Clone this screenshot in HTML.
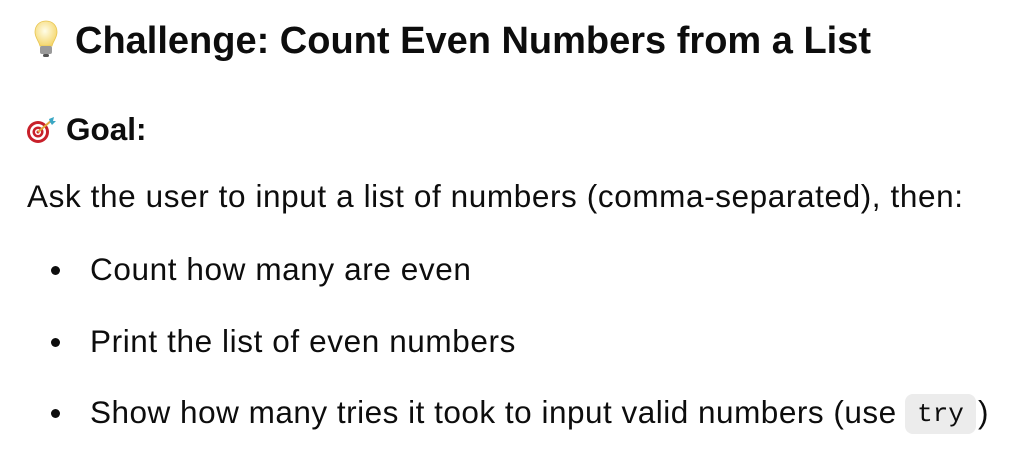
<!DOCTYPE html>
<html><head><meta charset="utf-8"><style>
body{margin:0;background:#fff;width:1024px;height:456px;overflow:hidden;font-family:"Liberation Sans",sans-serif;color:#0d0d0d;position:relative}
.a{position:absolute;white-space:nowrap}
h1{margin:0;font-size:38px;font-weight:bold;line-height:1.15}
.b{font-size:31.5px;letter-spacing:0.6px;line-height:1.15}
.dot{position:absolute;width:9px;height:9px;border-radius:50%;background:#0d0d0d}
.code{position:absolute;left:905px;top:394px;width:71px;height:40px;background:#ececec;border-radius:8px;font-family:"Liberation Mono",monospace;font-size:26px;line-height:40px;text-align:center;color:#0d0d0d}
</style></head><body>
<svg class="a" style="left:34px;top:20px" width="24" height="38" viewBox="0 0 24 38">
<defs><radialGradient id="g" cx="0.45" cy="0.4" r="0.6"><stop offset="0" stop-color="#fffde8"/><stop offset="1" stop-color="#f5d76e"/></radialGradient></defs>
<path d="M12 1C5 1 1 6 1 12c0 6 4 9 5 14h12c1-5 5-8 5-14C23 6 19 1 12 1z" fill="url(#g)" stroke="#e8c550" stroke-width="0.8"/>
<rect x="6" y="26" width="12" height="8" rx="2" fill="#9a9a9a"/><rect x="9" y="34" width="6" height="3" rx="1.5" fill="#555"/></svg>
<h1 class="a" style="left:75px;top:20px">Challenge: Count Even Numbers from a List</h1>
<svg class="a" style="left:25px;top:116px" width="32" height="28" viewBox="0 0 32 28">
<circle cx="13" cy="16" r="11" fill="#c8202a"/><circle cx="13" cy="16" r="8" fill="#fff"/><circle cx="13" cy="16" r="5.5" fill="#c8202a"/><circle cx="13" cy="16" r="3" fill="#fff"/><circle cx="13" cy="16" r="1.5" fill="#c8202a"/>
<path d="M13 16L27 4" stroke="#e2a93a" stroke-width="2"/><path d="M24 3l5-2-1 4 3 0-4 4-2-3z" fill="#3aa7c4"/></svg>
<div class="a b" style="left:66px;top:111px;font-weight:bold;letter-spacing:0">Goal:</div>
<div class="a b" style="left:27px;top:178px">Ask the user to input a list of numbers (comma-separated), then:</div>
<div class="dot" style="left:51px;top:266px"></div>
<div class="a b" style="left:90px;top:251px">Count how many are even</div>
<div class="dot" style="left:51px;top:338px"></div>
<div class="a b" style="left:90px;top:323px">Print the list of even numbers</div>
<div class="dot" style="left:51px;top:409px"></div>
<div class="a b" style="left:90px;top:394px;letter-spacing:0.5px">Show how many tries it took to input valid numbers (use</div>
<div class="code">try</div>
<div class="a b" style="left:978px;top:394px">)</div>
</body></html>
